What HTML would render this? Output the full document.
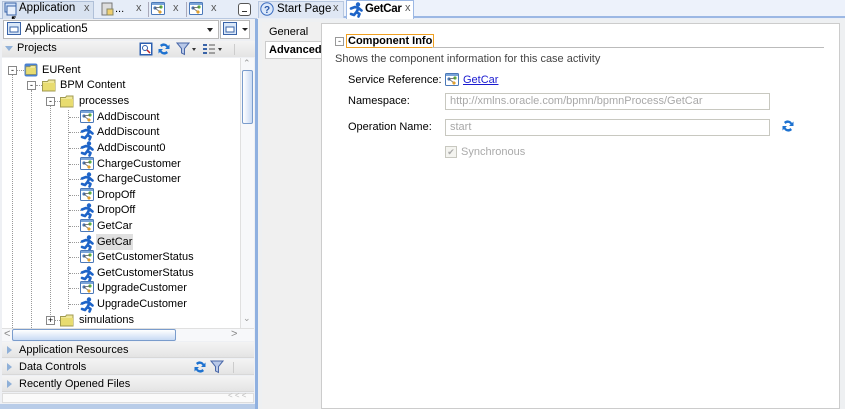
<!DOCTYPE html>
<html><head><meta charset="utf-8"><style>
*{margin:0;padding:0;box-sizing:border-box}
body{width:845px;height:409px;overflow:hidden;background:#e9eef7;font-family:"Liberation Sans",sans-serif;font-size:11px;color:#000;position:relative}
.a{position:absolute}
.t{position:absolute;white-space:nowrap}
.row{position:absolute;height:16px;line-height:16px;white-space:nowrap}
.dl{position:absolute;border-left:1px dotted #999}
.dh{position:absolute;border-top:1px dotted #999;width:12px}
.acc{position:absolute;left:2px;width:252px;height:16px;background:linear-gradient(#f4f4f4,#e4e4e4);border-bottom:1px solid #d8d8d8;line-height:16px;padding-left:17px}
.tri{position:absolute;left:5px;top:4px;width:0;height:0;border-left:5px solid #8fb0d8;border-top:4px solid transparent;border-bottom:4px solid transparent}
.inp{position:absolute;border:1px solid #c8c8c0;background:#fff;color:#a8a8a8;height:17px;line-height:15px;padding-left:4px}
</style></head><body>
<svg width="0" height="0" style="position:absolute"><defs>
<g id="proc"><rect x="0.5" y="0.5" width="13" height="12" rx="1" fill="#fff" stroke="#4a78b8"/><rect x="1" y="1" width="12" height="2" fill="#7aa4d8"/><circle cx="4" cy="6" r="1.6" fill="#4a78b8"/><circle cx="10" cy="5" r="1.6" fill="#5cb040"/><path d="M4 6L10 5M4 6L9 10" stroke="#555" stroke-width="0.8"/><path d="M9 8l2 2-2 2-2-2z" fill="#e0a030"/></g>
<g id="run"><circle cx="9" cy="2.5" r="2.2" fill="#1e64c8"/><path d="M2 6.5L6 5L9.5 6L12.5 8.5M9.5 6L7.5 10L10.5 12L9.5 14.5M7.5 10L5 13L2 12" stroke="#1e64c8" stroke-width="2.6" fill="none" stroke-linejoin="round" stroke-linecap="round"/></g>
<g id="fold"><path d="M0.5 3.5h5l1-1.5h6.5v11h-12.5z" fill="#f0e89a" stroke="#a09a50"/><rect x="1" y="5" width="12" height="7.5" fill="#e8dc70"/></g>
<g id="ref"><path d="M3 3a5 5 0 0 1 8 1l1.5-1.5v4.5h-4.5l1.5-1.5a3 3 0 0 0-5-.5z M11 11a5 5 0 0 1-8-1l-1.5 1.5v-4.5h4.5l-1.5 1.5a3 3 0 0 0 5 .5z" fill="#1e72d0"/></g>
</defs></svg>

<div class="a" style="left:0;top:0;width:257px;height:19px;background:#e6edf8;border-bottom:1px solid #b8c8e0"></div>
<div class="a" style="left:2px;top:1px;width:92px;height:18px;background:#d8e2f0;border:1px solid #b0c0d8;border-bottom:none"></div>
<svg class="a" style="left:4px;top:2px" width="14" height="14"><rect x="1" y="1" width="11" height="9" fill="#cfe0f8" stroke="#3a64a8"/><rect x="3" y="4" width="9" height="9" fill="#e8f0fc" stroke="#3a64a8"/></svg>
<div class="t" style="left:19px;top:2px;font-size:11.5px">Application</div>
<div class="t" style="left:84px;top:2px;color:#555">x</div>
<svg class="a" style="left:101px;top:2px" width="14" height="14"><rect x="1" y="1" width="10" height="12" fill="#ddd" stroke="#777"/><rect x="6" y="7" width="6" height="6" fill="#f0d070" stroke="#886"/></svg>
<div class="t" style="left:115px;top:3px">...</div>
<div class="t" style="left:136px;top:2px;color:#555">x</div>
<div class="a" style="left:148px;top:2px;width:1px;height:15px;background:#aab"></div>
<svg class="a" style="left:151px;top:2px" width="15" height="14"><use href="#proc"/></svg>
<div class="t" style="left:173px;top:2px;color:#555">x</div>
<div class="a" style="left:186px;top:2px;width:1px;height:15px;background:#aab"></div>
<svg class="a" style="left:189px;top:2px" width="15" height="14"><use href="#proc"/></svg>
<div class="t" style="left:211px;top:2px;color:#555">x</div>
<div class="a" style="left:238px;top:3px;width:13px;height:13px;border:1px solid #555;border-radius:3px;background:#fff"></div>
<div class="a" style="left:242px;top:11px;width:5px;height:1px;background:#333"></div>
<div class="t" style="left:10px;top:12px;font-size:13px">&#x2196;</div>

<div class="a" style="left:0;top:19px;width:257px;height:390px;background:#eef0f4"></div>
<div class="a" style="left:3px;top:20px;width:216px;height:19px;background:#fff;border:1px solid #b8b8b8"></div>
<svg class="a" style="left:7px;top:22px" width="14" height="14"><rect x="0.5" y="0.5" width="13" height="12" fill="#dbe8f8" stroke="#3a64a8"/><rect x="3" y="5" width="8" height="5" fill="#fff" stroke="#3a64a8"/></svg>
<div class="t" style="left:25px;top:23px;font-size:11.5px">Application5</div>
<div class="a" style="left:207px;top:28px;border-left:3.5px solid transparent;border-right:3.5px solid transparent;border-top:4px solid #222"></div>
<div class="a" style="left:220px;top:20px;width:30px;height:19px;background:#fff;border:1px solid #b8b8b8"></div>
<svg class="a" style="left:223px;top:22px" width="14" height="14"><rect x="0.5" y="0.5" width="13" height="12" fill="#dbe8f8" stroke="#3a64a8"/><rect x="3" y="5" width="8" height="5" fill="#fff" stroke="#3a64a8"/></svg>
<div class="a" style="left:242px;top:28px;border-left:3px solid transparent;border-right:3px solid transparent;border-top:3px solid #222"></div>

<div class="a" style="left:2px;top:41px;width:253px;height:16px;background:linear-gradient(#f4f4f4,#e4e4e4)"></div>
<div class="a" style="left:5px;top:46px;border-left:4px solid transparent;border-right:4px solid transparent;border-top:5px solid #8fb0d8"></div>
<div class="t" style="left:17px;top:42px">Projects</div>
<svg class="a" style="left:139px;top:42px" width="14" height="14"><rect x="0.5" y="0.5" width="13" height="13" fill="#2c5fb0"/><rect x="2" y="2" width="10" height="10" fill="#fff"/><circle cx="6" cy="6" r="2.5" fill="none" stroke="#2c5fb0"/><path d="M8 8l3 3" stroke="#c02020" stroke-width="1.5"/></svg>
<svg class="a" style="left:157px;top:42px" width="14" height="14"><use href="#ref"/></svg>
<svg class="a" style="left:176px;top:42px" width="14" height="14"><path d="M1 1h12l-4.5 5.5v6l-3-1.5v-4.5z" fill="#b8c8e8" stroke="#4a68a8"/></svg>
<div class="a" style="left:192px;top:48px;border-left:2.5px solid transparent;border-right:2.5px solid transparent;border-top:3px solid #333"></div>
<svg class="a" style="left:202px;top:42px" width="14" height="14"><rect x="1" y="2" width="4" height="2" fill="#3a64a8"/><rect x="1" y="6" width="4" height="2" fill="#3a64a8"/><rect x="1" y="10" width="4" height="2" fill="#3a64a8"/><path d="M7 3h6M7 7h6M7 11h6" stroke="#555"/></svg>
<div class="a" style="left:218px;top:48px;border-left:2.5px solid transparent;border-right:2.5px solid transparent;border-top:3px solid #333"></div>
<div class="a" style="left:234px;top:44px;width:1px;height:11px;background:#ccc"></div>

<div class="a" style="left:2px;top:58px;width:238px;height:270px;background:#fff"></div>
<div class="a" style="left:240px;top:58px;width:14px;height:270px;background:#f7f8fa;border-left:1px solid #e0e0e0"></div>
<div class="a" style="left:242px;top:70px;width:11px;height:54px;background:linear-gradient(90deg,#fff,#c8daf4);border:1px solid #7a9ccc;border-radius:2px"></div>
<div class="t" style="left:243px;top:58px;color:#999;font-size:9px">&#x2303;</div>
<div class="t" style="left:243px;top:313px;color:#999;font-size:9px">&#x2304;</div>

<div class="dl" style="left:12px;top:75px;height:253px"></div>
<div class="dl" style="left:31px;top:90px;height:238px"></div>
<div class="dl" style="left:50px;top:106px;height:215px"></div>
<div class="dl" style="left:68px;top:110px;height:199px"></div>

<div class="a" style="left:8px;top:66px;width:9px;height:9px;border:1px solid #888;background:#fff;font-size:9px;line-height:6px;text-align:center">-</div>
<div class="dh" style="left:17px;top:70px;width:7px"></div>
<svg class="a" style="left:24px;top:63px" width="14" height="14"><rect x="0.5" y="0.5" width="13" height="13" rx="2" fill="#4a80d0"/><use href="#fold" transform="translate(1.5,1) scale(0.8)"/></svg>
<div class="row" style="left:42px;top:62px">EURent</div>

<div class="a" style="left:27px;top:81px;width:9px;height:9px;border:1px solid #888;background:#fff;font-size:9px;line-height:6px;text-align:center">-</div>
<div class="dh" style="left:36px;top:85px;width:6px"></div>
<svg class="a" style="left:42px;top:78px" width="15" height="14"><use href="#fold"/></svg>
<div class="row" style="left:60px;top:77px">BPM Content</div>

<div class="a" style="left:46px;top:97px;width:9px;height:9px;border:1px solid #888;background:#fff;font-size:9px;line-height:6px;text-align:center">-</div>
<div class="dh" style="left:55px;top:101px;width:5px"></div>
<svg class="a" style="left:60px;top:94px" width="15" height="14"><use href="#fold"/></svg>
<div class="row" style="left:79px;top:93px">processes</div>

<div class="dh" style="left:69px;top:117px"></div><svg class="a" style="left:80px;top:110px" width="15" height="14"><use href="#proc"/></svg><div class="row" style="left:97px;top:109px">AddDiscount</div>
<div class="dh" style="left:69px;top:132px"></div><svg class="a" style="left:80px;top:125px" width="15" height="16"><use href="#run"/></svg><div class="row" style="left:97px;top:124px">AddDiscount</div>
<div class="dh" style="left:69px;top:148px"></div><svg class="a" style="left:80px;top:141px" width="15" height="16"><use href="#run"/></svg><div class="row" style="left:97px;top:140px">AddDiscount0</div>
<div class="dh" style="left:69px;top:164px"></div><svg class="a" style="left:80px;top:157px" width="15" height="14"><use href="#proc"/></svg><div class="row" style="left:97px;top:156px">ChargeCustomer</div>
<div class="dh" style="left:69px;top:179px"></div><svg class="a" style="left:80px;top:172px" width="15" height="16"><use href="#run"/></svg><div class="row" style="left:97px;top:171px">ChargeCustomer</div>
<div class="dh" style="left:69px;top:195px"></div><svg class="a" style="left:80px;top:188px" width="15" height="14"><use href="#proc"/></svg><div class="row" style="left:97px;top:187px">DropOff</div>
<div class="dh" style="left:69px;top:210px"></div><svg class="a" style="left:80px;top:203px" width="15" height="16"><use href="#run"/></svg><div class="row" style="left:97px;top:202px">DropOff</div>
<div class="dh" style="left:69px;top:226px"></div><svg class="a" style="left:80px;top:219px" width="15" height="14"><use href="#proc"/></svg><div class="row" style="left:97px;top:218px">GetCar</div>
<div class="dh" style="left:69px;top:242px"></div><svg class="a" style="left:80px;top:235px" width="15" height="16"><use href="#run"/></svg><div class="row" style="left:96px;top:234px;background:#e0e0e0;padding:0 1px">GetCar</div>
<div class="dh" style="left:69px;top:257px"></div><svg class="a" style="left:80px;top:250px" width="15" height="14"><use href="#proc"/></svg><div class="row" style="left:97px;top:249px">GetCustomerStatus</div>
<div class="dh" style="left:69px;top:273px"></div><svg class="a" style="left:80px;top:266px" width="15" height="16"><use href="#run"/></svg><div class="row" style="left:97px;top:265px">GetCustomerStatus</div>
<div class="dh" style="left:69px;top:288px"></div><svg class="a" style="left:80px;top:281px" width="15" height="14"><use href="#proc"/></svg><div class="row" style="left:97px;top:280px">UpgradeCustomer</div>
<div class="dh" style="left:69px;top:304px"></div><svg class="a" style="left:80px;top:297px" width="15" height="16"><use href="#run"/></svg><div class="row" style="left:97px;top:296px">UpgradeCustomer</div>

<div class="a" style="left:46px;top:316px;width:9px;height:9px;border:1px solid #888;background:#fff;font-size:9px;line-height:7px;text-align:center">+</div>
<div class="dh" style="left:55px;top:320px;width:5px"></div>
<svg class="a" style="left:60px;top:313px" width="15" height="14"><use href="#fold"/></svg>
<div class="row" style="left:79px;top:312px">simulations</div>

<div class="a" style="left:2px;top:328px;width:252px;height:13px;background:#f7f8fa;border-top:1px solid #e0e0e0"></div>
<div class="t" style="left:4px;top:328px;color:#888">&lt;</div>
<div class="t" style="left:231px;top:328px;color:#888">&gt;</div>
<div class="a" style="left:12px;top:329px;width:164px;height:12px;background:linear-gradient(#fff,#c8daf4);border:1px solid #7a9ccc;border-radius:2px"></div>

<div class="acc" style="top:342px"><div class="tri"></div>Application Resources</div>
<div class="acc" style="top:359px"><div class="tri"></div>Data Controls</div>
<svg class="a" style="left:193px;top:360px" width="14" height="14"><use href="#ref"/></svg>
<svg class="a" style="left:210px;top:360px" width="14" height="14"><path d="M1 1h12l-4.5 5.5v6l-3-1.5v-4.5z" fill="#b8c8e8" stroke="#4a68a8"/></svg>
<div class="a" style="left:233px;top:362px;width:1px;height:11px;background:#ccc"></div>
<div class="acc" style="top:376px"><div class="tri"></div>Recently Opened Files</div>
<div class="a" style="left:2px;top:393px;width:252px;height:10px;background:#fafafa;border:1px solid #ddd"></div>
<div class="t" style="left:228px;top:391px;color:#bbb;font-size:8px">&lt; &lt; &lt;</div>
<div class="a" style="left:0;top:404px;width:257px;height:5px;background:#b8cce8"></div>
<div class="a" style="left:255px;top:19px;width:3px;height:390px;background:#8fb0e0"></div>

<div class="a" style="left:258px;top:0;width:587px;height:18px;background:#edf2fb;border-bottom:2px solid #9cb8e4"></div>
<div class="a" style="left:258px;top:1px;width:86px;height:17px;background:#dfe7f4;border:1px solid #b8c8e0;border-bottom:none"></div>
<svg class="a" style="left:260px;top:2px" width="14" height="14"><circle cx="7" cy="7" r="6.2" fill="#dbe8fa" stroke="#3a6cc0"/><text x="4" y="11" font-size="10" font-family="Liberation Sans" fill="#2a58a8" font-weight="bold">?</text></svg>
<div class="t" style="left:277px;top:3px;font-size:11.5px">Start Page</div>
<div class="t" style="left:333px;top:2px;color:#555">x</div>
<div class="a" style="left:346px;top:0;width:68px;height:19px;background:#fff;border:1px solid #9cb8e4;border-bottom:none"></div>
<svg class="a" style="left:349px;top:2px" width="15" height="16"><use href="#run"/></svg>
<div class="t" style="left:365px;top:3px;font-weight:bold;font-size:11.5px;letter-spacing:-0.3px">GetCar</div>
<div class="t" style="left:405px;top:2px;color:#555">x</div>

<div class="a" style="left:258px;top:19px;width:587px;height:390px;background:#eef0f2"></div>
<div class="a" style="left:262px;top:22px;width:60px;height:387px;background:#f0f0f0"></div>
<div class="t" style="left:269px;top:26px">General</div>
<div class="a" style="left:265px;top:41px;width:60px;height:18px;background:#fff;border:1px solid #ccc;border-right:none"></div>
<div class="t" style="left:269px;top:44px;font-weight:bold">Advanced</div>
<div class="a" style="left:321px;top:23px;width:519px;height:386px;background:#fff;border:1px solid #ccc"></div>

<div class="a" style="left:335px;top:37px;width:9px;height:9px;border:1px solid #999;font-size:9px;line-height:6px;text-align:center;color:#555">-</div>
<div class="t" style="left:346px;top:34px;border:1px solid #f0a020;padding:0 1px;font-weight:bold;height:14px;line-height:12px">Component Info</div>
<div class="a" style="left:432px;top:47px;width:392px;height:1px;background:#bbb"></div>
<div class="t" style="left:335px;top:53px;color:#444">Shows the component information for this case activity</div>
<div class="t" style="left:348px;top:74px">Service Reference:</div>
<svg class="a" style="left:445px;top:73px" width="15" height="14"><use href="#proc"/></svg>
<div class="t" style="left:463px;top:74px;color:#1a1ad0;text-decoration:underline">GetCar</div>
<div class="t" style="left:348px;top:95px">Namespace:</div>
<div class="inp" style="left:445px;top:93px;width:325px">http://xmlns.oracle.com/bpmn/bpmnProcess/GetCar</div>
<div class="t" style="left:348px;top:121px">Operation Name:</div>
<div class="inp" style="left:445px;top:119px;width:325px">start</div>
<svg class="a" style="left:781px;top:119px" width="15" height="15"><use href="#ref"/></svg>
<div class="a" style="left:445px;top:146px;width:12px;height:12px;border:1px solid #c8c8c0;background:#f4f4f0;color:#aaa;font-size:9px;line-height:10px;text-align:center">&#x2714;</div>
<div class="t" style="left:461px;top:146px;color:#aaa">Synchronous</div>
</body></html>
